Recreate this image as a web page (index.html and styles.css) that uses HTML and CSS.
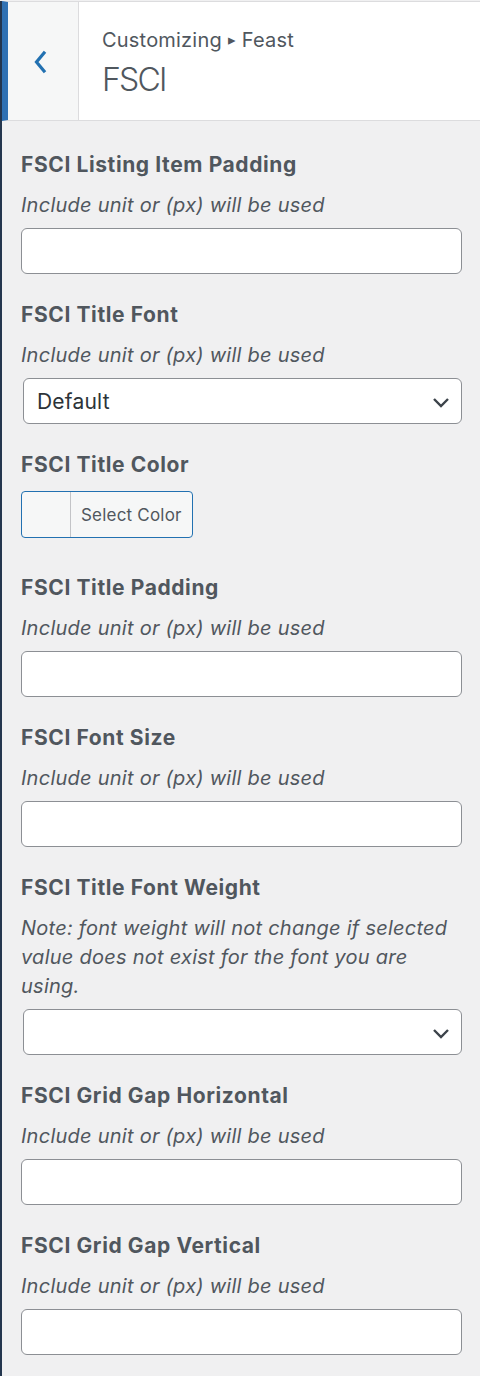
FILE: index.html
```html
<!DOCTYPE html>
<html>
<head>
<meta charset="utf-8">
<link rel="stylesheet" href="styles.css">
</head>
<body>
<div class="panel">
  <header class="head">
    <button class="back" aria-label="Back">
      <svg width="16" height="24" viewBox="0 0 16 24"><path d="M12 3 L4.5 12 L12 21" fill="none" stroke="#2271b1" stroke-width="3.2" stroke-linecap="square"/></svg>
    </button>
    <div class="titles">
      <div class="crumb">Customizing <span class="tri">&#9656;</span> Feast</div>
      <div class="title">FSCI</div>
    </div>
  </header>
  <main class="controls">
    <div class="ctrl">
      <div class="label">FSCI Listing Item Padding</div>
      <div class="desc">Include unit or (px) will be used</div>
      <input class="field" type="text">
    </div>
    <div class="ctrl">
      <div class="label">FSCI Title Font</div>
      <div class="desc">Include unit or (px) will be used</div>
      <div class="select"><span>Default</span><svg class="chev" width="20" height="14" viewBox="0 0 20 14"><path d="M3 4 L10 11 L17 4" fill="none" stroke="#3c434a" stroke-width="2.4"/></svg></div>
    </div>
    <div class="ctrl ctrl-color">
      <div class="label">FSCI Title Color</div>
      <div class="colorbtn"><span class="swatch"></span><span class="ctext">Select Color</span></div>
    </div>
    <div class="ctrl">
      <div class="label">FSCI Title Padding</div>
      <div class="desc">Include unit or (px) will be used</div>
      <input class="field" type="text">
    </div>
    <div class="ctrl">
      <div class="label">FSCI Font Size</div>
      <div class="desc">Include unit or (px) will be used</div>
      <input class="field" type="text">
    </div>
    <div class="ctrl">
      <div class="label">FSCI Title Font Weight</div>
      <div class="desc">Note: font weight will not change if selected value does not exist for the font you are using.</div>
      <div class="select"><span></span><svg class="chev" width="20" height="14" viewBox="0 0 20 14"><path d="M3 4 L10 11 L17 4" fill="none" stroke="#3c434a" stroke-width="2.4"/></svg></div>
    </div>
    <div class="ctrl">
      <div class="label">FSCI Grid Gap Horizontal</div>
      <div class="desc">Include unit or (px) will be used</div>
      <input class="field" type="text">
    </div>
    <div class="ctrl">
      <div class="label">FSCI Grid Gap Vertical</div>
      <div class="desc">Include unit or (px) will be used</div>
      <input class="field" type="text">
    </div>
  </main>
</div>
</body>
</html>
```
FILE: styles.css
```css
html, body {
  margin: 0;
  padding: 0;
  height: 100%;
}
body {
  background: #f0f0f1;
  font-family: Inter, "Noto Sans", sans-serif;
  color: #50575e;
}
.panel {
  border-left: 2px solid #24364e;
  min-height: 1376px;
  box-sizing: border-box;
}
.head {
  display: flex;
  margin-top: 1px;
  height: 120px;
  background: #fff;
  border-top: 1px solid #dcdcde;
  border-bottom: 1px solid #dcdcde;
  border-left: 6px solid #3071b3;
  box-sizing: border-box;
}
.back {
  width: 71px;
  background: #f6f7f7;
  border: 0;
  border-right: 1px solid #dcdcde;
  padding: 0;
  display: flex;
  align-items: center;
  justify-content: center;
  margin: 0;
}
.back svg { margin-left: -7px; margin-top: 1px; }
.titles {
  padding-left: 23px;
  padding-top: 24px;
}
.crumb {
  font-size: 20px;
  line-height: 28px;
  letter-spacing: 0.2px;
  color: #50575e;
}
.tri { font-size: 15px; vertical-align: 2px; }
.title {
  font-size: 32px;
  font-weight: 300;
  line-height: 40px;
  margin-top: 6px;
  letter-spacing: -1.8px;
  color: #50575e;
}
.controls {
  padding: 29px 18px 0 19px;
}
.ctrl {
  margin-bottom: 26px;
}
.ctrl-color { margin-bottom: 35px; }
.label {
  font-size: 21px;
  font-weight: 700;
  line-height: 30px;
  letter-spacing: 0.6px;
  margin-bottom: 11px;
}
.desc {
  font-size: 20px;
  font-style: italic;
  line-height: 29px;
  letter-spacing: 0.25px;
  margin-bottom: 8px;
}
.field {
  display: block;
  width: 100%;
  height: 46px;
  box-sizing: border-box;
  border: 1px solid #8c8f94;
  border-radius: 6px;
  background: #fff;
  margin: 0;
  padding: 0 12px;
  font-size: 20px;
}
.select {
  display: flex;
  align-items: center;
  justify-content: space-between;
  height: 46px;
  margin-left: 2px;
  box-sizing: border-box;
  border: 1px solid #8c8f94;
  border-radius: 6px;
  background: #fff;
  padding: 0 10px 0 13px;
  font-size: 21px;
  letter-spacing: 0.2px;
  color: #2c3338;
}
.chev { margin-top: 1px; }
.colorbtn {
  display: flex;
  width: 172px;
  height: 47px;
  box-sizing: border-box;
  border: 1px solid #2271b1;
  border-radius: 4px;
  background: #f6f7f7;
  overflow: hidden;
}
.swatch {
  width: 48px;
  border-right: 1px solid #c3c4c7;
}
.ctext {
  display: flex;
  align-items: center;
  padding-left: 10px;
  font-size: 17px;
  letter-spacing: 0.2px;
  color: #50575e;
}
```
